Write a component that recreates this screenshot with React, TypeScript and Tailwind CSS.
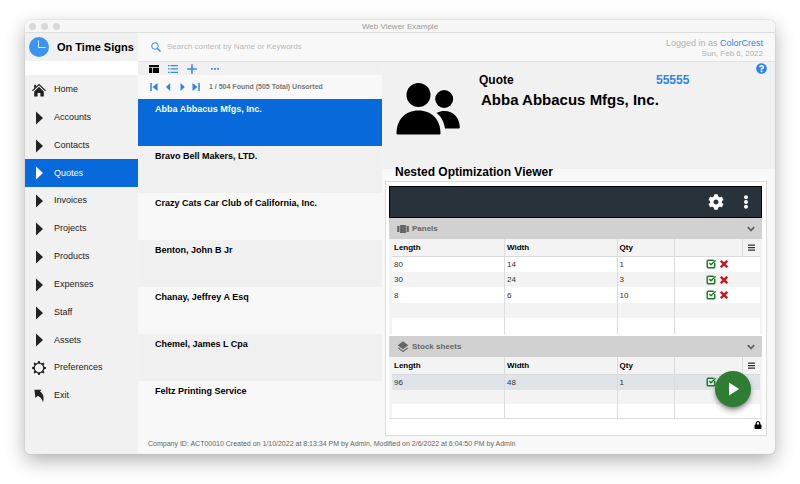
import { useState } from 'react';
import { SquareCheckBig } from 'lucide-react';
import { FaCog, FaEllipsisV, FaLock, FaQuestionCircle } from 'react-icons/fa';
import { MdLayers, MdViewCarousel } from 'react-icons/md';

type IconName = 'home' | 'arrow' | 'gear' | 'exit';
type Row = { length: string; width: string; qty: string };

const navItems: { label: string; icon: IconName }[] = [
  { label: 'Home', icon: 'home' },
  { label: 'Accounts', icon: 'arrow' },
  { label: 'Contacts', icon: 'arrow' },
  { label: 'Quotes', icon: 'arrow' },
  { label: 'Invoices', icon: 'arrow' },
  { label: 'Projects', icon: 'arrow' },
  { label: 'Products', icon: 'arrow' },
  { label: 'Expenses', icon: 'arrow' },
  { label: 'Staff', icon: 'arrow' },
  { label: 'Assets', icon: 'arrow' },
  { label: 'Preferences', icon: 'gear' },
  { label: 'Exit', icon: 'exit' },
];

const records = [
  'Abba Abbacus Mfgs, Inc.',
  'Bravo Bell Makers, LTD.',
  'Crazy Cats Car Club of California, Inc.',
  'Benton, John B Jr',
  'Chanay, Jeffrey A Esq',
  'Chemel, James L Cpa',
  'Feltz Printing Service',
];

const panels: Row[] = [
  { length: '80', width: '14', qty: '1' },
  { length: '30', width: '24', qty: '3' },
  { length: '8', width: '6', qty: '10' },
];

const stockSheets: Row[] = [{ length: '96', width: '48', qty: '1' }];

const gearAngles = [0, 45, 90, 135, 180, 225, 270, 315];

function NavIcon({ name }: { name: IconName }) {
  if (name === 'home') {
    return (
      <svg viewBox="0 0 14 14" className="h-3.5 w-3.5" fill="currentColor">
        <path d="M7 3.8 2.200 8.400v5.100h3.400V10h2.800v3.500h3.400V8.400z" />
        <path d="M.5 7.800 7 1.600l6.500 6.200" fill="none" stroke="currentColor" strokeWidth="1.200" />
        <path d="M2.200 1.800h1.800v2L2.200 5.500z" />
      </svg>
    );
  }
  if (name === 'gear') {
    return (
      <svg viewBox="0 0 14 14" className="h-3.5 w-3.5" fill="currentColor">
        <circle cx="7" cy="7" r="4.8" fill="none" stroke="currentColor" strokeWidth="1.3" />
        {gearAngles.map((a) => (
          <path key={a} d="M5.7 2 6.3 0h1.4l.6 2z" transform={`rotate(${a} 7 7)`} />
        ))}
      </svg>
    );
  }
  if (name === 'exit') {
    return (
      <svg viewBox="0 0 14 14" className="h-3.5 w-3.5" fill="currentColor">
        <path d="M2.400.8h7.200L8 2.600c3.200 2 4.400 5.600 3 10.800-.6-3-2.300-5.200-5.200-6.600L3.400 9z" />
      </svg>
    );
  }
  return (
    <svg viewBox="0 0 14 14" className="h-3.5 w-3.5" fill="currentColor">
      <path d="M4 .5 11 7l-7 6.500z" />
    </svg>
  );
}

function ClockLogo() {
  return (
    <svg viewBox="0 0 20 20" className="h-5 w-5 shrink-0">
      <circle cx="10" cy="10" r="10" fill="#3d94f0" />
      <path d="M9.500 3.500v7h7" fill="none" stroke="#d9ebff" strokeWidth="1" />
    </svg>
  );
}

function PeopleIcon() {
  return (
    <svg viewBox="0 0 64 54" className="h-[54px] w-16 shrink-0" fill="#000">
      <circle cx="22.500" cy="13" r="12" />
      <circle cx="48.200" cy="17" r="9" />
      <path d="M.5 51.500C.5 38 9 28.500 22.500 28.500S44.500 38 44.500 51.500q0 1-1 1h-42q-1 0-1-1z" />
      <path d="M40.500 31c3-1.500 5-2 8-2 9 0 15.300 7 15.300 16.500q0 1-1 1H49C48 40 45.500 34.500 40.500 31z" />
    </svg>
  );
}

function Sidebar({ active, onSelect }: { active: string; onSelect: (label: string) => void }) {
  return (
    <aside className="flex w-[113px] shrink-0 flex-col bg-[#f1f1f1]">
      <div className="flex h-[28px] items-center gap-2 pl-1">
        <ClockLogo />
        <span className="whitespace-nowrap text-[11px] font-bold text-black">On Time Signs</span>
      </div>
      <input aria-label="Quick find" className="h-[14px] w-full bg-white outline-none" />
      <nav className="flex flex-1 flex-col pb-[44px] pt-px">
        {navItems.map((item) => (
          <button
            key={item.label}
            onClick={() => onSelect(item.label)}
            className={
              item.label === active
                ? 'flex min-h-[27px] flex-1 items-center gap-2 bg-[#0769da] pl-[7px] text-[9px] text-white'
                : 'flex min-h-[27px] flex-1 items-center gap-2 pl-[7px] text-[9px] text-[#222]'
            }
          >
            <NavIcon name={item.icon} />
            {item.label}
          </button>
        ))}
      </nav>
    </aside>
  );
}

function Header() {
  return (
    <header className="flex h-[29px] items-center border-b border-[#e2e2e2] bg-[#f8f8f8] px-3">
      <label htmlFor="search" className="pl-px text-[#3389ea]">
        <svg viewBox="0 0 10 10" className="h-2.5 w-2.5" fill="none" stroke="currentColor">
          <circle cx="4" cy="4" r="3.300" />
          <path d="m6.500 6.500 3 3" strokeWidth="1.400" />
        </svg>
      </label>
      <input
        id="search"
        placeholder="Search content by Name or Keywords"
        className="min-w-0 flex-1 bg-transparent pl-1.5 text-[8px] text-gray-700 outline-none placeholder:text-[#b9b9b9]"
      />
      <div className="text-right text-[#b0b0b0]">
        <p className="pt-0.5 text-[9px] leading-3">
          Logged in as <a href="#account" className="text-[#2b85ea]">ColorCrest</a>
        </p>
        <p className="text-[8px] leading-[10px]">Sun, Feb 6, 2022</p>
      </div>
    </header>
  );
}

function ListToolbar() {
  return (
    <div className="flex h-[13px] items-center bg-[#f0f0f0] pl-[11px] text-[#3389ea]">
      <button aria-label="Form view" className="text-black">
        <svg viewBox="0 0 10 8" className="h-2 w-2.5" fill="currentColor">
          <path d="M0 0h10v2H0zM0 2.700h3V8H0zM3.800 2.700H10V8H3.800z" />
        </svg>
      </button>
      <button aria-label="List view" className="ml-[9px]">
        <svg viewBox="0 0 10 8" className="h-2 w-2.5" fill="currentColor">
          <path d="M0 0h1.500v1.300H0zM2.500 0H10v1.300H2.500zM0 3.300h1.500v1.300H0zM2.500 3.300H10v1.300H2.500zM0 6.700h1.500V8H0zM2.500 6.700H10V8H2.500z" />
        </svg>
      </button>
      <button aria-label="New record" className="ml-[9px]">
        <svg viewBox="0 0 10 10" className="h-2.5 w-2.5" stroke="currentColor" strokeWidth="1.600">
          <path d="M5 .2v9.600M.2 5h9.600" />
        </svg>
      </button>
      <button aria-label="More actions" className="ml-[14px]">
        <svg viewBox="0 0 8 2" className="h-0.5 w-2" fill="currentColor">
          <path d="M0 0h1.800v1.800H0zM3.100 0h1.800v1.800H3.100zM6.200 0H8v1.800H6.200z" />
        </svg>
      </button>
    </div>
  );
}

function RecordPager() {
  return (
    <div className="flex h-[24px] items-center bg-[#f8f8f8] pl-3 text-[#2b85ea]">
      <button aria-label="First record">
        <svg viewBox="0 0 8 8" className="h-2 w-2" fill="currentColor">
          <path d="M.3 0h1.500v8H.3zM7.500 0v8L2.500 4z" />
        </svg>
      </button>
      <button aria-label="Previous record" className="ml-1.5">
        <svg viewBox="0 0 8 8" className="h-2 w-2" fill="currentColor">
          <path d="M6.200 0v8L2 4z" />
        </svg>
      </button>
      <button aria-label="Next record" className="ml-1.5">
        <svg viewBox="0 0 8 8" className="h-2 w-2" fill="currentColor">
          <path d="M2.500 0v8l4.300-4z" />
        </svg>
      </button>
      <button aria-label="Last record" className="ml-1.5">
        <svg viewBox="0 0 8 8" className="h-2 w-2" fill="currentColor">
          <path d="M6.300 0h1.500v8H6.300zM.5 0v8l5-4z" />
        </svg>
      </button>
      <span className="ml-[9px] whitespace-nowrap text-[7px] font-bold text-[#777]">
        1 / 504 Found (505 Total) Unsorted
      </span>
    </div>
  );
}

function RecordList({ selected, onSelect }: { selected: string; onSelect: (name: string) => void }) {
  return (
    <ul>
      {records.map((name) => (
        <li key={name} className="odd:bg-[#f8f8f8] even:bg-[#f0f0f0]">
          <button
            onClick={() => onSelect(name)}
            className={
              name === selected
                ? 'flex h-[47px] w-full bg-[#0769da] pl-[17px] pt-1 text-[9px] leading-3 font-bold text-white'
                : 'flex h-[47px] w-full pl-[17px] pt-1 text-[9px] leading-3 font-bold text-black'
            }
          >
            {name}
          </button>
        </li>
      ))}
    </ul>
  );
}

function SectionBar({ title, icon }: { title: string; icon: React.ReactNode }) {
  return (
    <button className="flex h-[21px] w-full items-center gap-0.5 bg-[#d1d1d1] pl-[7px] pr-[7px] text-[8px] font-bold text-[#666]">
      {icon}
      {title}
      <svg viewBox="0 0 8 6" className="ml-auto h-1.5 w-2" fill="none" stroke="currentColor" strokeWidth="1.800">
        <path d="M.8 1.200 4 4.400l3.200-3.200" />
      </svg>
    </button>
  );
}

function SizeTable({ rows, emptyRows, highlight }: { rows: Row[]; emptyRows: number; highlight?: boolean }) {
  const empty = Array.from({ length: emptyRows }, (_, i) => i);

  return (
    <div className="bg-[#f3f3f3] pl-[3px] pr-0.5">
      <table className="w-full table-fixed border-collapse text-left text-[8px] leading-[14px] text-[#333]">
        <thead>
          <tr className="h-[17px] border-b border-[#d9d9d9] text-black">
            <th className="border-r border-[#dcdcdc] pl-0.5 pt-px">Length</th>
            <th className="border-r border-[#dcdcdc] pl-0.5 pt-px">Width</th>
            <th className="w-[57px] border-r border-[#dcdcdc] pl-0.5 pt-px">Qty</th>
            <th className="w-[68px] border-r border-[#dcdcdc]" />
            <th className="w-[18px]">
              <button aria-label="Columns" className="flex w-full justify-center text-[#333]">
                <svg viewBox="0 0 7 7" className="h-[7px] w-[7px]" fill="currentColor">
                  <path d="M0 .5h7v1.200H0zM0 3h7v1.200H0zM0 5.500h7v1.200H0z" />
                </svg>
              </button>
            </th>
          </tr>
        </thead>
        <tbody>
          {rows.map((row) => (
            <tr
              key={row.length}
              className={
                highlight ? 'h-4 bg-[#dfe4e8]' : 'odd:h-4 even:h-[15px] odd:bg-white even:bg-[#f3f3f3]'
              }
            >
              <td className="border-r border-[#dcdcdc] pl-0.5 pt-px">{row.length}</td>
              <td className="border-r border-[#dcdcdc] pl-0.5 pt-px">{row.width}</td>
              <td className="border-r border-[#dcdcdc] pl-0.5 pt-px">{row.qty}</td>
              <td colSpan={2}>
                <div className="flex items-center gap-1 pl-[31px]">
                  <button aria-label="Enable row" className="text-[#1c7a28]">
                    <SquareCheckBig className="h-2.5 w-2.5" strokeWidth={3.5} />
                  </button>
                  <button aria-label="Delete row" className="text-[#c4161c]">
                    <svg viewBox="0 0 8 8" className="h-2 w-2" stroke="currentColor" strokeWidth="2.300">
                      <path d="m.8.8 6.400 6.400M7.200.8.8 7.200" />
                    </svg>
                  </button>
                </div>
              </td>
            </tr>
          ))}
          {empty.map((i) => (
            <tr
              key={i}
              className={
                highlight
                  ? 'h-[14px] odd:bg-white even:bg-[#f3f3f3]'
                  : 'odd:h-4 even:h-[15px] odd:bg-white even:bg-[#f3f3f3]'
              }
            >
              <td className="border-r border-[#dcdcdc]" />
              <td className="border-r border-[#dcdcdc]" />
              <td className="border-r border-[#dcdcdc]" />
              <td colSpan={2} />
            </tr>
          ))}
        </tbody>
      </table>
    </div>
  );
}

function OptimizationViewer() {
  return (
    <div className="relative ml-[3px] mr-2 border border-[#dcdcdc] bg-white pl-[3px] pr-1 pt-1">
      <div className="flex h-8 items-center justify-end gap-[19px] border border-black bg-[#28323a] pr-3 text-white">
        <button aria-label="Settings">
          <FaCog className="h-4 w-4" />
        </button>
        <button aria-label="Menu">
          <FaEllipsisV className="h-3.5 w-1.5" />
        </button>
      </div>
      <SectionBar title="Panels" icon={<MdViewCarousel className="h-3.5 w-3.5" />} />
      <SizeTable rows={panels} emptyRows={2} />
      <div className="h-0.5 bg-white" />
      <SectionBar title="Stock sheets" icon={<MdLayers className="h-3.5 w-3.5" />} />
      <div className="border-b border-[#dcdcdc]">
        <SizeTable rows={stockSheets} emptyRows={2} highlight />
      </div>
      <div className="flex h-4 items-start justify-end pt-0.5">
        <FaLock className="h-2 w-2 text-black" />
      </div>
      <button
        aria-label="Run optimization"
        className="absolute bottom-7 right-[15px] flex h-9 w-9 items-center justify-center rounded-full bg-[#2e7d32] shadow-md shadow-black/40"
      >
        <svg viewBox="0 0 12 14" className="h-3.5 w-3" fill="#fff">
          <path d="M2 .5v13L12 7z" />
        </svg>
      </button>
    </div>
  );
}

function QuoteDetail({ name }: { name: string }) {
  return (
    <section className="flex min-w-0 flex-1 flex-col">
      <div className="flex h-[107px] items-start bg-[#f1f1f1] pl-[14px] pr-2">
        <div className="pt-5">
          <PeopleIcon />
        </div>
        <div className="min-w-0 flex-1 pl-[19px] pt-[11px]">
          <div className="flex text-[12px] leading-[14px] font-bold text-black">
            <h2 className="w-[177px]">Quote</h2>
            <a href="#quote" className="text-[#2b85ea]">55555</a>
          </div>
          <h1 className="mt-1 pl-0.5 text-[15px] leading-[18px] font-bold text-black">{name}</h1>
        </div>
        <button aria-label="Help" className="pt-px text-[#2b85ea]">
          <FaQuestionCircle className="h-[11px] w-[11px]" />
        </button>
      </div>
      <h3 className="-mt-1 mb-0.5 pl-[13px] text-[12px] leading-[14px] font-bold text-black">
        Nested Optimization Viewer
      </h3>
      <OptimizationViewer />
    </section>
  );
}

export default function App() {
  const [active, setActive] = useState('Quotes');
  const [selected, setSelected] = useState(records[0]);

  return (
    <div className="bg-white px-[25px] pt-5 pb-[30px] font-['Liberation_Sans',Arial,sans-serif]">
      <div className="overflow-hidden rounded-[5px] bg-[#f8f8f8] shadow-[0_0_1px_rgba(0,0,0,0.4),0_7px_20px_rgba(0,0,0,0.3)]">
        <div className="flex h-[13px] items-center border-b border-[#dedede] bg-[#f6f6f6] px-1">
          <div className="flex flex-1 gap-[5px]">
            <span className="h-[7px] w-[7px] rounded-full bg-[#d8d8d8]" />
            <span className="h-[7px] w-[7px] rounded-full bg-[#d8d8d8]" />
            <span className="h-[7px] w-[7px] rounded-full bg-[#d8d8d8]" />
          </div>
          <span className="pt-0.5 text-[8px] leading-[12px] text-[#9a9a9a]">Web Viewer Example</span>
          <div className="flex-1" />
        </div>
        <div className="flex">
          <Sidebar active={active} onSelect={setActive} />
          <main className="flex min-w-0 flex-1 flex-col">
            <Header />
            <div className="flex">
              <div className="w-[244px] shrink-0">
                <ListToolbar />
                <RecordPager />
                <RecordList selected={selected} onSelect={setSelected} />
              </div>
              <QuoteDetail name={selected} />
            </div>
            <footer className="h-[18px] pl-2.5 text-[7px] leading-[16px] text-[#666]">
              Company ID: ACT00010 Created on 1/10/2022 at 8:13:34 PM by Admin, Modified on 2/6/2022 at 6:04:50 PM by Admin
            </footer>
          </main>
        </div>
      </div>
    </div>
  );
}
